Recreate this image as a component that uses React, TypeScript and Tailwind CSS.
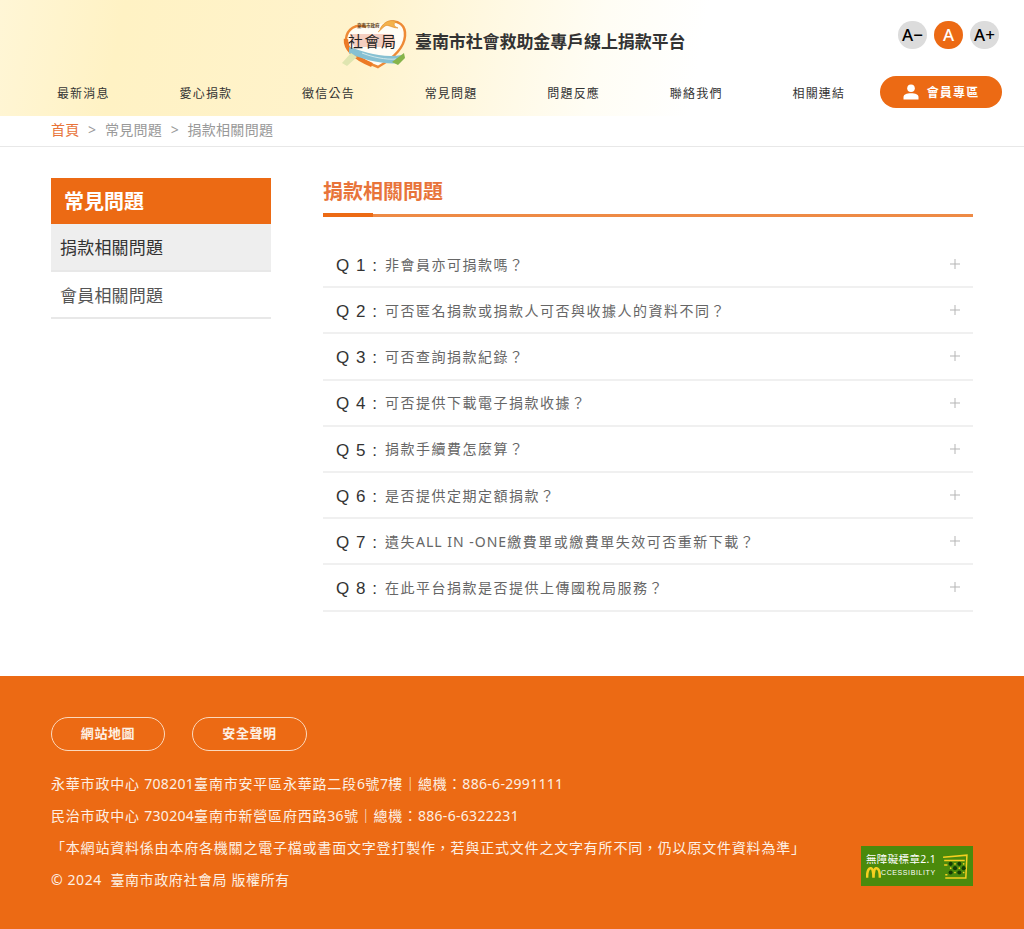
import type { ReactNode } from "react";

const navItems = ["最新消息", "愛心捐款", "徵信公告", "常見問題", "問題反應", "聯絡我們", "相關連結"];

const questions: ReactNode[] = [
  "非會員亦可捐款嗎？",
  "可否匿名捐款或捐款人可否與收據人的資料不同？",
  "可否查詢捐款紀錄？",
  "可否提供下載電子捐款收據？",
  "捐款手續費怎麼算？",
  "是否提供定期定額捐款？",
  <>遺失<span className="tracking-[1px]">ALL IN -ONE</span>繳費單或繳費單失效可否重新下載？</>,
  "在此平台捐款是否提供上傳國稅局服務？",
];

const Logo = () => (
  <svg viewBox="0 0 66 54" className="w-[66px] h-[54px] shrink-0">
    <path d="M24 12 C14 8 5 14 4 24 C3 36 20 46 36 52 C50 44 62 34 63 21 C64 10 56 5 48 7" fill="#fffdf6" stroke="#ee8a36" strokeWidth="2.5" />
    <path d="M4 24 C3 36 18 45 30 50" fill="none" stroke="#ec7a26" strokeWidth="4.5" />
    <path d="M38 14 C42 6 50 3 56 8 C52 6 50 11 56 13 C50 13 46 9 43 11 C40 13 38 16 36 17" fill="#f3b24c" stroke="#e08a2c" strokeWidth="0.6" />
    <path d="M8 19 H50 C54 23 54 29 50 32 H13 C9 28 8 24 8 19 Z" fill="#f5cfc0" />
    <path d="M7 32 C20 36 40 44 60 40 L58 48 C42 50 18 44 7 38 Z" fill="#86c0d2" />
    <path d="M20 38 C30 42 44 45 54 44" fill="none" stroke="#eef6f4" strokeWidth="0.7" />
    <path d="M50 47 L62 38 L63 43 L56 50 Z" fill="#86b44a" />
    <path d="M0 48 L9 38 L15 42 L5 51 Z" fill="#dfe5b0" />
    <text x="15" y="12" fontSize="4.5" fontWeight="700" fill="#5c3d22" fontFamily="'Noto Sans CJK TC', sans-serif">臺南市政府</text>
    <text x="6" y="32" fontSize="15" fontWeight="400" fill="#222" letterSpacing="1.5" fontFamily="'Noto Sans CJK TC', sans-serif">社會局</text>
  </svg>
);

const Badge = () => (
  <div className="w-[112px] h-[40px] bg-[#4b8a0c] flex items-center pl-[5px] pr-[5px] justify-between shrink-0">
    <div className="flex flex-col text-white leading-none">
      <span className="text-[10.5px] whitespace-nowrap tracking-[0.35px]">無障礙標章2.1</span>
      <span className="flex items-center mt-[3px]">
        <svg viewBox="0 0 14 10" className="w-[15px] h-[11px]">
          <path d="M1 10 C1 2 3 1 4.5 1 C6 1 7 4 7 10 C7 4 8 1 9.5 1 C11 1 13 2 13 10" fill="none" stroke="#f5d020" strokeWidth="2.4" />
        </svg>
        <span className="text-[7px] tracking-[0.6px] leading-none font-['Liberation_Sans',sans-serif]">CCESSIBILITY</span>
      </span>
    </div>
    <svg viewBox="0 0 24 24" className="w-[26px] h-[26px]">
      <path d="M1 4 L23 2 L22 23 H3 M2 7 H21 M2 11 H5 M3 20 H5" fill="none" stroke="#f5d020" strokeWidth="1.4" />
      {[10, 14, 18].map((y) =>
        [8, 12, 16, 20].map((x) => (
          <circle key={`${x}-${y}`} cx={x} cy={y} r={(x + y) % 8 === 2 ? 1.9 : 0.8} fill={(x + y) % 8 === 2 ? "#143c05" : "#f5d020"} />
        )),
      )}
    </svg>
  </div>
);

const Num = ({ children }: { children: string }) => <span className="tracking-[0.3px]">{children}</span>;

export default function App() {
  return (
    <div className="min-h-[929px] bg-white flex flex-col font-['Noto_Sans','Noto_Sans_CJK_TC',sans-serif]">
      {/* header */}
      <header className="h-[116px] bg-[linear-gradient(100deg,#fff6d6_0%,#fff2c4_12%,#fff3cc_35%,#fffdf4_58%,#ffffff_68%)] flex flex-col">
        <div className="h-[76px] flex items-start relative">
          <div className="flex items-center gap-[7px] ml-[342px] pt-[15px]">
            <Logo />
            <span className="text-[17px] font-bold text-[#333] tracking-[-0.1px] mt-[2px] font-['Liberation_Serif','Noto_Sans_CJK_TC',serif]">
              臺南市社會救助金專戶線上捐款平台
            </span>
          </div>
          <div className="absolute right-[25px] top-[21px] flex gap-[7px]">
            <button className="w-[29px] h-[28px] rounded-full bg-[#dcdcdc] text-[17px] font-medium text-black">A−</button>
            <button className="w-[29px] h-[28px] rounded-full bg-[#ec6a14] text-[17px] font-medium text-white">A</button>
            <button className="w-[29px] h-[28px] rounded-full bg-[#dcdcdc] text-[17px] font-medium text-black">A+</button>
          </div>
        </div>
        <nav className="flex items-start pl-[22px] pr-[22px]">
          <ul className="flex flex-1">
            {navItems.map((item) => (
              <li key={item} className="w-[122.6px] h-[32px] pt-[4px] flex items-center justify-center text-[12px] tracking-[1.2px] text-[#333]">
                {item}
              </li>
            ))}
          </ul>
          <button className="w-[122px] h-[32px] rounded-full bg-[#ec6a14] text-white text-[12px] font-bold flex items-center justify-center gap-[8px] tracking-[1.2px] pt-[2px]">
            <svg viewBox="0 0 16 16" className="w-[16px] h-[16px] -mt-[3px]" fill="currentColor">
              <circle cx="8" cy="4.2" r="3.8" />
              <path d="M0.5 15.5 V13 C0.5 10.4 3.5 9.2 8 9.2 C12.5 9.2 15.5 10.4 15.5 13 V15.5 Z" />
            </svg>
            會員專區
          </button>
        </nav>
      </header>

      {/* breadcrumb */}
      <div className="h-[31px] border-b border-[#e8e8e8] pl-[51px] flex items-center gap-[8.5px] text-[14px] tracking-[0.3px] text-[#999] pb-[3px]">
        <span className="text-[#e8743a]">首頁</span>
        <span>&gt;</span>
        <span>常見問題</span>
        <span>&gt;</span>
        <span>捐款相關問題</span>
      </div>

      {/* content */}
      <main className="flex-1 flex pl-[51px] pt-[31px] gap-[52px]">
        <aside className="w-[220px]">
          <h2 className="h-[46px] bg-[#ec6a14] text-white text-[20px] font-bold flex items-center pl-[13px] pt-[2px]">常見問題</h2>
          <ul>
            <li className="h-[48px] bg-[#eeeeee] border-b-2 border-[#e8e8e8] text-[17px] text-[#333] flex items-center pl-[9px] pt-[2px] tracking-[0.2px]">捐款相關問題</li>
            <li className="h-[47px] border-b-2 border-[#e8e8e8] text-[17px] text-[#555] flex items-center pl-[9px] pt-[2px] tracking-[0.2px]">會員相關問題</li>
          </ul>
        </aside>
        <section className="w-[650px]">
          <h1 className="h-[36px] text-[20px] font-bold text-[#e8743a] leading-[28px]">捐款相關問題</h1>
          <div className="h-[3px] bg-[#ee8a45] relative mb-[25px]">
            <div className="absolute left-0 bottom-0 h-[4px] w-[50px] bg-[#ec6a14]" />
          </div>
          <ul>
            {questions.map((q, i) => (
              <li key={i} className="h-[46.2px] border-b-2 border-[#f0f0f0] flex items-center pl-[13px] pr-[13px]">
                <span className="text-[17px] text-[#333] tracking-[1px] pt-[3px] font-['Liberation_Sans',sans-serif] w-[49px] shrink-0 whitespace-nowrap">Q {i + 1} :</span>
                <span className="flex-1 text-[14px] text-[#666] tracking-[1.5px]">{q}</span>
                <svg viewBox="0 0 12 12" className="w-[10px] h-[10px]">
                  <path d="M6 0 V12 M0 6 H12" stroke="#b5b5b5" strokeWidth="1.2" />
                </svg>
              </li>
            ))}
          </ul>
        </section>
      </main>

      {/* footer */}
      <footer className="h-[253px] bg-[#ec6a14] text-[#fdf0e4] pl-[51px] pr-[51px] pt-[41px]">
        <div className="flex gap-[27px]">
          <button className="w-[114px] h-[34px] rounded-full border border-[#fbd9bd] text-[13px] font-bold tracking-[0.6px]">網站地圖</button>
          <button className="w-[115px] h-[34px] rounded-full border border-[#fbd9bd] text-[13px] font-bold tracking-[0.6px]">安全聲明</button>
        </div>
        <div className="flex justify-between items-end mt-[16px]">
          <div className="text-[14px] tracking-[0.8px]">
            <p className="leading-[33px]">永華市政中心 <Num>708201</Num>臺南市安平區永華路二段<Num>6</Num>號<Num>7</Num>樓｜總機：<Num>886-6-2991111</Num></p>
            <p className="leading-[32px]">民治市政中心 <Num>730204</Num>臺南市新營區府西路<Num>36</Num>號｜總機：<Num>886-6-6322231</Num></p>
            <p className="leading-[32px]">「本網站資料係由本府各機關之電子檔或書面文字登打製作，若與正式文件之文字有所不同，仍以原文件資料為準」</p>
            <p className="leading-[31px] tracking-[0.6px]">© 2024&nbsp; 臺南市政府社會局 版權所有</p>
          </div>
          <div className="pb-[9px]">
            <Badge />
          </div>
        </div>
      </footer>
    </div>
  );
}
